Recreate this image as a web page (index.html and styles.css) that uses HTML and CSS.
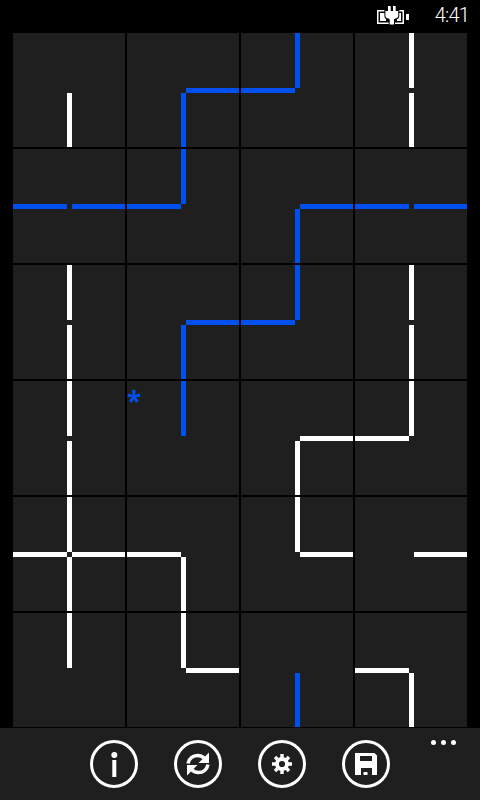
FILE: index.html
```html
<!DOCTYPE html>
<html lang="en">

<head>
    <meta charset="UTF-8">
    <meta name="viewport" content="width=device-width, initial-scale=1.0">
    <title>Pipes</title>
    <link rel="stylesheet" href="styles.css">
</head>

<body>
    <div class="status-bar">
        <svg class="battery" width="33" height="19" viewBox="0 0 33 19">
            <path d="M.75 4.750h25.500v12.500H.75z" fill="none" stroke="#fff" stroke-width="1.500"/>
            <path d="M3 7h6v8H3zM20 7h4v8h-4z" fill="#fff"/>
            <path d="M29 8h3v6h-3z" fill="#fff"/>
            <path d="M11 0h2.700v5h2.300V0h2.700v5h2.600v5c0 1.500-2 2.700-4.300 3V18.500h-4.300V13c-2.300-.3-4.300-1.500-4.300-3V5H11z" fill="#fff" stroke="#000" stroke-width="2" paint-order="stroke"/>
        </svg>
        <span class="clock">4:41</span>
    </div>

    <div class="board">
        <!-- row 1 -->
        <div class="cell"><i class="arm bottom white"></i></div>
        <div class="cell"><i class="arm right blue"></i><i class="arm bottom blue"></i></div>
        <div class="cell"><i class="arm top blue"></i><i class="arm left blue"></i></div>
        <div class="cell"><i class="arm top white"></i><i class="arm bottom white"></i></div>
        <!-- row 2 -->
        <div class="cell"><i class="arm left blue"></i><i class="arm right blue"></i></div>
        <div class="cell"><i class="arm top blue"></i><i class="arm left blue"></i></div>
        <div class="cell"><i class="arm right blue"></i><i class="arm bottom blue"></i></div>
        <div class="cell"><i class="arm left blue"></i><i class="arm right blue"></i></div>
        <!-- row 3 -->
        <div class="cell"><i class="arm top white"></i><i class="arm bottom white"></i></div>
        <div class="cell"><i class="arm right blue"></i><i class="arm bottom blue"></i></div>
        <div class="cell"><i class="arm top blue"></i><i class="arm left blue"></i></div>
        <div class="cell"><i class="arm top white"></i><i class="arm bottom white"></i></div>
        <!-- row 4 -->
        <div class="cell"><i class="arm top white"></i><i class="arm bottom white"></i></div>
        <div class="cell"><span class="mark">*</span><i class="arm top blue"></i></div>
        <div class="cell"><i class="arm right white"></i><i class="arm bottom white"></i></div>
        <div class="cell"><i class="arm top white"></i><i class="arm left white"></i></div>
        <!-- row 5 -->
        <div class="cell"><i class="arm top white"></i><i class="arm left white"></i><i class="arm right white"></i><i class="arm bottom white"></i></div>
        <div class="cell"><i class="arm left white"></i><i class="arm bottom white"></i></div>
        <div class="cell"><i class="arm top white"></i><i class="arm right white"></i></div>
        <div class="cell"><i class="arm right white"></i></div>
        <!-- row 6 -->
        <div class="cell"><i class="arm top white"></i></div>
        <div class="cell"><i class="arm top white"></i><i class="arm right white"></i></div>
        <div class="cell"><i class="arm bottom blue"></i></div>
        <div class="cell"><i class="arm left white"></i><i class="arm bottom white"></i></div>
    </div>

    <div class="app-bar">
        <button class="round-btn" aria-label="info">
            <svg width="26" height="34" viewBox="0 0 26 34">
                <circle cx="13.300" cy="8" r="3" fill="#fff"/>
                <path d="M11.300 13h4v17h-4z" fill="#fff"/>
            </svg>
        </button>
        <button class="round-btn" aria-label="refresh">
            <svg width="24" height="24" viewBox="0 0 24 24">
                <g id="half">
                    <path d="M2 11.500C3 6.500 7 3.500 11.500 3.500c3 0 5 1 6.500 2.500" fill="none" stroke="#fff" stroke-width="3.600"/>
                    <path d="M23 .5v10.500H12.500z" fill="#fff"/>
                </g>
                <use href="#half" transform="rotate(180 12 12)"/>
            </svg>
        </button>
        <button class="round-btn" aria-label="settings">
            <svg width="20" height="20" viewBox="0 0 20 20">
                <circle cx="10" cy="10" r="5" fill="none" stroke="#fff" stroke-width="3.800"/>
                <path d="M10 0v4M10 16v4M0 10h4M16 10h4M3 3l2.800 2.800M14.200 14.200L17 17M3 17l2.800-2.800M14.200 5.800L17 3" stroke="#fff" stroke-width="3.400"/>
            </svg>
        </button>
        <button class="round-btn" aria-label="save">
            <svg width="22" height="22" viewBox="0 0 22 22">
                <path fill-rule="evenodd" d="M0 0h19.500L22 2.500V22H0zM5 3v5h12V3zM6 15v7h11v-7zM8.500 19h4v3h-4z" fill="#fff"/>
            </svg>
        </button>
        <div class="more"><b></b><b></b><b></b></div>
    </div>
</body>

</html>
```

FILE: styles.css
```css
body {
    margin: 0;
    width: 480px;
    height: 800px;
    overflow: hidden;
    background-color: #000;
    font-family: "Open Sans", sans-serif;
    color: #fff;
}

.status-bar {
    height: 33px;
    display: flex;
    justify-content: flex-end;
    align-items: flex-start;
    padding-right: 11px;
}

.battery {
    margin: 6px 25px 0 0;
}

.clock {
    font-family: Roboto, sans-serif;
    font-size: 20px;
    font-weight: 300;
    letter-spacing: -0.8px;
    line-height: 30px;
}

.board {
    display: grid;
    grid-template-columns: repeat(4, 112px);
    grid-template-rows: repeat(6, 114px);
    gap: 2px;
    padding-left: 13px;
}

.cell {
    position: relative;
    display: grid;
    grid-template-columns: 54px 5px 53px;
    grid-template-rows: 55px 5px 54px;
    background-color: #1f1f1f;
}

.arm {
    display: block;
}

.white {
    background-color: #fff;
}

.blue {
    background-color: #0050ef;
}

.top {
    grid-area: 1 / 2;
}

.left {
    grid-area: 2 / 1;
}

.right {
    grid-area: 2 / 3;
}

.bottom {
    grid-area: 3 / 2;
}

.mark {
    position: absolute;
    left: 0;
    top: 2px;
    font-family: "Open Sans", sans-serif;
    font-size: 26px;
    font-weight: 700;
    line-height: 36px;
    color: #0050ef;
}

.app-bar {
    position: relative;
    height: 72px;
    margin-top: 1px;
    display: flex;
    justify-content: center;
    gap: 36px;
    padding-top: 12px;
    box-sizing: border-box;
    background-color: #1f1f1f;
}

.round-btn {
    width: 48px;
    height: 48px;
    padding: 0;
    display: flex;
    align-items: center;
    justify-content: center;
    background: none;
    border: 3px solid #fff;
    border-radius: 50%;
}

.more {
    position: absolute;
    right: 24px;
    top: 12px;
    display: flex;
    gap: 5px;
}

.more b {
    width: 5px;
    height: 5px;
    border-radius: 50%;
    background-color: #fff;
}
```
